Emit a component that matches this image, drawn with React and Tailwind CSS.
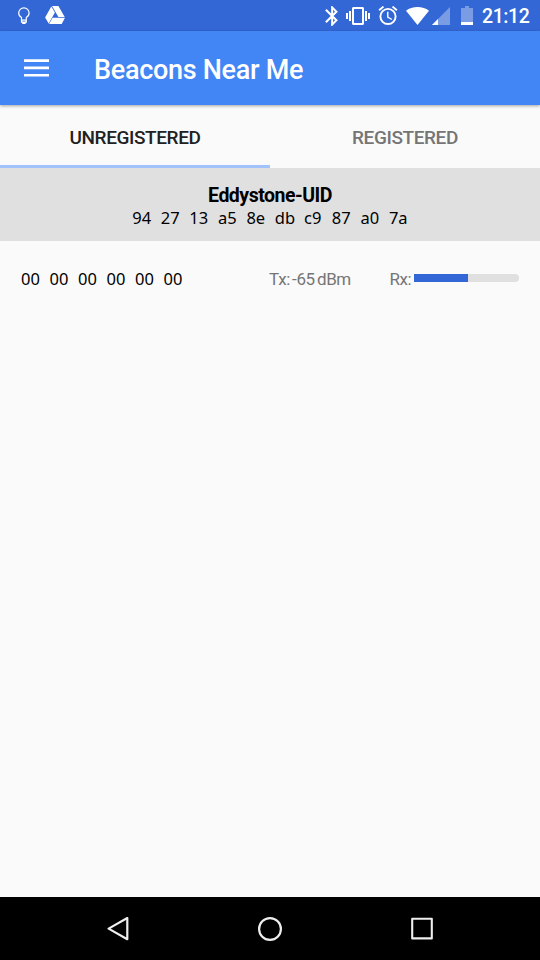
import React from "react";

function Bytes({ value, className }) {
  return (
    <div className={`flex gap-[9.5px] font-['Noto_Sans',sans-serif] text-[16.5px] leading-[22px] text-black ${className}`}>
      {value.split(" ").map((pair, i) => (
        <span key={i} className="w-[19px] text-center whitespace-nowrap">{pair}</span>
      ))}
    </div>
  );
}

function StatusBar() {
  return (
    <div className="flex h-[31px] items-start bg-[#3367d6] text-white">
      <svg className="mt-[7px] ml-[18px] h-[18px] w-3" viewBox="0 0 12 18" fill="none" stroke="currentColor" strokeWidth="1.2">
        <path d="M3.5 13.2V10.6C1.7 9.6.7 8 .7 6.1a5.2 5.2 0 0 1 10.4 0c0 1.9-1 3.5-2.8 4.5v2.6z" />
        <path d="M3.6 13.2v1.9h4.6v-1.9M4.2 16.4h3.4" strokeWidth="1.4" />
      </svg>
      <svg className="mt-[6px] ml-[15px] h-[18px] w-5" viewBox="0 0 20 18" fill="currentColor">
        <path d="M6.3.4 9.9 6.4 3.7 17.4.1 11.4zM7 0h6.4L19.7 11h-6.3zM7.6 11.7H20L16.7 18H4.1z" />
      </svg>
      <svg className="mt-[6px] ml-[260px] h-[20px] w-[13px]" viewBox="5 2 12.71 20" fill="currentColor">
        <path d="M17.71 7.71 12 2h-1v7.59L6.41 5 5 6.41 10.59 12 5 17.59 6.41 19 11 14.41V22h1l5.71-5.71-4.3-4.29zM13 5.83l1.88 1.88L13 9.59zm1.88 10.46L13 18.17v-3.76z" />
      </svg>
      <svg className="mt-[7px] ml-[8px] h-[18px] w-[24px]" viewBox="0 3 24 18" fill="currentColor">
        <path d="M0 15h2V9H0zm3 2h2V7H3zm19-8v6h2V9zm-3 8h2V7h-2zM16.5 3h-9C6.67 3 6 3.67 6 4.5v15c0 .83.67 1.5 1.5 1.5h9c.83 0 1.5-.67 1.5-1.5v-15c0-.83-.67-1.5-1.5-1.5zM16 19H8V5h8z" />
      </svg>
      <svg className="mt-[6px] ml-[8px] h-[19px] w-[20px]" viewBox="2 2 20 20" fill="currentColor">
        <path d="m22 5.72-4.6-3.86-1.29 1.53 4.6 3.86zM7.88 3.39 6.6 1.86 2 5.71l1.29 1.53zM12.5 8H11v6l4.75 2.85.75-1.23-4-2.37zM12 4a9 9 0 1 0 0 18 9 9 0 0 0 0-18zm0 16a7 7 0 1 1 0-14 7 7 0 0 1 0 14z" />
      </svg>
      <svg className="mt-[7px] ml-[8px] h-[18px] w-[23px]" viewBox="0 0 23 18" fill="currentColor">
        <path d="M11.5 18 0 3.7C3.2 1.2 7.1 0 11.5 0S19.8 1.2 23 3.7z" />
      </svg>
      <svg className="mt-[7px] ml-[3px] h-[18px] w-[18px]" viewBox="0 0 18 18" fill="currentColor">
        <path d="M18 0v18H0z" opacity=".35" />
        <path d="M6 12v6H0z" />
      </svg>
      <svg className="mt-[6px] ml-[11px] h-[19px] w-[12px]" viewBox="0 0 12 19" fill="currentColor">
        <path d="M4 0h4v2h4v14H0V2h4z" opacity=".35" />
        <path d="M0 16h12v3H0z" />
      </svg>
      <span className="mt-[5px] ml-[9px] text-[19.5px] leading-[23px] font-medium tracking-[-0.4px]">21:12</span>
    </div>
  );
}

function AppBar() {
  return (
    <header className="relative flex h-[74px] items-center bg-[#4285f4] text-white shadow-[0_1px_3px_rgba(0,0,0,0.35)]">
      <svg className="ml-6 h-[18px] w-[25px]" viewBox="0 0 25 18" fill="currentColor">
        <path d="M0 .3h25v2.6H0zM0 7.6h25v2.6H0zM0 14.9h25v2.6H0z" />
      </svg>
      <h1 className="mt-1 ml-[45px] text-[27px] leading-8 font-medium tracking-[-0.3px] whitespace-nowrap">Beacons Near Me</h1>
    </header>
  );
}

export default function App() {
  return (
    <div className="flex h-[960px] w-[540px] flex-col overflow-hidden bg-[#fafafa] font-[Roboto,sans-serif]">
      <StatusBar />
      <AppBar />
      <nav className="flex h-[63px] text-[19px] leading-[24px] font-medium tracking-[-0.4px]">
        <div className="w-1/2 border-b-[3px] border-[#a1c2fa] pt-[21px] text-center text-[#212121]">UNREGISTERED</div>
        <div className="w-1/2 pt-[21px] text-center text-[#757575]">REGISTERED</div>
      </nav>
      <section className="flex h-[73px] flex-col items-center bg-[#e0e0e0] pt-[15px]">
        <h2 className="pt-px text-[19.5px] leading-[23px] font-bold tracking-[-0.5px] text-black">Eddystone-UID</h2>
        <Bytes value="94 27 13 a5 8e db c9 87 a0 7a" className="" />
      </section>
      <main className="flex flex-1 items-start pt-[27px] text-[17px] leading-[22px] text-[#757575]">
        <Bytes value="00 00 00 00 00 00" className="ml-[21px] w-[248px]" />
        <span className="w-[120.5px] tracking-[-0.35px] whitespace-nowrap [word-spacing:-1.8px]">Tx: -65 dBm</span>
        <span className="w-[24.5px] tracking-[-0.5px]">Rx:</span>
        <div className="mt-[6px] h-[8px] w-[105px] overflow-hidden rounded-r-full bg-[#e0e0e0]">
          <div className="h-full w-[54px] bg-[#3367d6]" />
        </div>
      </main>
      <footer className="flex h-[63px] items-center bg-black text-[#eee]">
        <svg className="ml-[106px] h-6 w-6" viewBox="0 0 24 24" fill="none" stroke="currentColor" strokeWidth="2.2" strokeLinejoin="round">
          <path d="M2.6 11.6 21.3 1v21.2z" />
        </svg>
        <svg className="ml-[128px] h-6 w-6" viewBox="0 0 24 24" fill="none" stroke="currentColor" strokeWidth="2.2">
          <circle cx="12" cy="12" r="10.9" />
        </svg>
        <svg className="ml-[128px] h-6 w-6" viewBox="0 0 24 24" fill="none" stroke="currentColor" strokeWidth="2.1" strokeLinejoin="round">
          <path d="M2.2 1.8h19.6v19.6H2.2z" />
        </svg>
      </footer>
    </div>
  );
}
